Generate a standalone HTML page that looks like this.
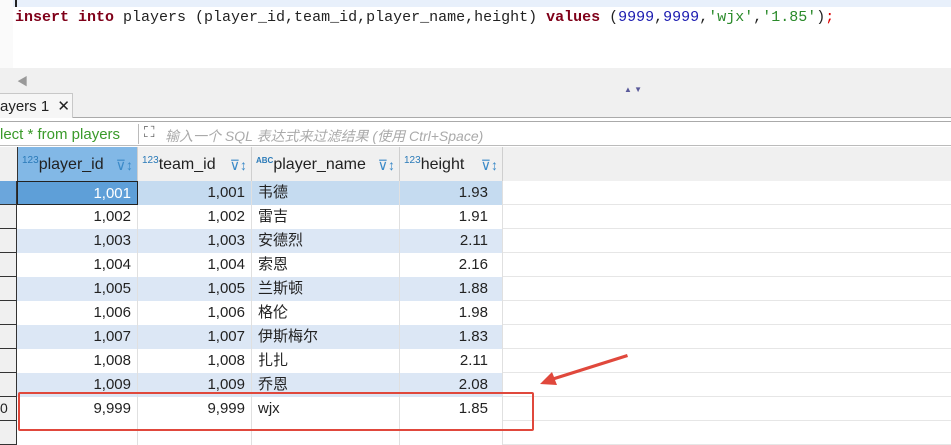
<!DOCTYPE html>
<html><head><meta charset="utf-8"><style>
*{margin:0;padding:0;box-sizing:border-box}
body{width:951px;height:435px;overflow:hidden;background:#fff;position:relative;font-family:"Liberation Sans","Noto Sans CJK SC",sans-serif;}
.abs{position:absolute}
.code{left:15px;top:9px;font:15px "Liberation Mono",monospace;white-space:pre;color:#222}
.kw{color:#7f0019;font-weight:bold}.num{color:#1a1ab0}.str{color:#2a8a2a}.red{color:#d00}
.row{position:absolute;left:0;width:951px;height:24px;border-bottom:1px solid #e6e6e6;font-size:15px;color:#222}
.c{position:absolute;top:0;height:24px;line-height:23px;border-right:1px solid #e0e0e0;padding:0 6px;white-space:nowrap}
.r{text-align:right}
.h{position:absolute;top:147px;height:34px;line-height:36px;font-size:16px;color:#222;border-right:1px solid #cfcfcf;padding-left:4px}
.ic{font-size:10px;color:#2a7ab8;vertical-align:top;line-height:28px}
.fi{position:absolute;right:4px;top:0;font-size:14px;color:#3b8ac8}
</style></head><body>
<div class="abs" style="left:0;top:0;width:951px;height:7px;background:#e8f0fb"></div>
<div class="abs" style="left:0;top:0;width:13px;height:68px;background:#fafafa"></div>
<div class="abs" style="left:15px;top:0;width:2px;height:7px;background:#222"></div>
<div class="abs code"><span class="kw">insert into</span> players (player_id,team_id,player_name,height) <span class="kw">values</span> (<span class="num">9999</span>,<span class="num">9999</span>,<span class="str">'wjx'</span>,<span class="str">'1.85'</span>)<span class="red">;</span></div>
<div class="abs" style="left:0;top:68px;width:951px;height:50px;background:#f0f0f0"></div>
<div class="abs" style="left:17px;top:73px;font-size:11px;color:#999">◀</div>
<div class="abs" style="left:624px;top:85px;font-size:8px;color:#5a5a9a">▲ ▼</div>
<div class="abs" style="left:0;top:93px;width:73px;height:25px;background:#f6f6f6;border:1px solid #c8c8c8;border-bottom:none;border-left:none;font-size:15px;line-height:26px;color:#222">ayers 1 <span style="margin-left:4px">✕</span></div>
<div class="abs" style="left:73px;top:117px;width:878px;height:1px;background:#aaa"></div>
<div class="abs" style="left:0;top:121px;width:951px;height:1px;background:#aaa"></div>
<div class="abs" style="left:0;top:122px;width:951px;height:24px;border-bottom:1px solid #bbb;background:#fff"></div>
<div class="abs" style="left:0;top:126px;font-size:15px;color:#3a9a2a">lect * from players</div>
<div class="abs" style="left:138px;top:124px;width:1px;height:20px;background:#bbb"></div>
<div class="abs" style="left:144px;top:124px;font-size:15px;color:#555">⛶</div>
<div class="abs" style="left:165px;top:126px;font-size:14px;font-style:italic;color:#aaa">输入一个 SQL 表达式来过滤结果 (使用 Ctrl+Space)</div>
<div class="abs" style="left:0;top:147px;width:951px;height:34px;background:#f0f0f0"></div>
<div class="h" style="left:17px;width:121px;background:#82b8e6;border-left:1px solid #333"><span class="ic">123</span>player_id<span class="fi">⊽↕</span></div>
<div class="h" style="left:138px;width:114px"><span class="ic">123</span>team_id<span class="fi">⊽↕</span></div>
<div class="h" style="left:252px;width:148px"><span class="ic" style="font-size:8px;font-weight:bold">ABC</span>player_name<span class="fi">⊽↕</span></div>
<div class="h" style="left:400px;width:103px"><span class="ic">123</span>height<span class="fi">⊽↕</span></div>
<div id="rows"></div>
<script>
var d=[["1,001","韦德","1.93"],["1,002","雷吉","1.91"],["1,003","安德烈","2.11"],["1,004","索恩","2.16"],["1,005","兰斯顿","1.88"],["1,006","格伦","1.98"],["1,007","伊斯梅尔","1.83"],["1,008","扎扎","2.11"],["1,009","乔恩","2.08"],["9,999","wjx","1.85"],["","",""]];
var h="";
for(var i=0;i<d.length;i++){var y=181+i*24;var bg=i==0?"#c5dbf0":(i%2==0&&i<10?"#dce7f5":"#fff");
var rn=i==0?"#6ba6dc":"#f0f0f0";
h+='<div class="row" style="top:'+y+'px"><div class="c" style="left:0;width:17px;background:'+rn+';border-right:1px solid #333;border-bottom:1px solid #333;padding:0;font-size:14px">'+(i==9?"0":"")+'</div>';
var s=i==0?'background:#5e9fd8;color:#fff;border:1px solid #222;':'background:'+bg+';';
h+='<div class="c r" style="left:17px;width:121px;'+s+'">'+d[i][0]+'</div>';
h+='<div class="c r" style="left:138px;width:114px;background:'+bg+'">'+d[i][0]+'</div>';
h+='<div class="c" style="left:252px;width:148px;background:'+bg+'">'+d[i][1]+'</div>';
h+='<div class="c r" style="left:400px;width:103px;background:'+bg+';padding-right:14px">'+d[i][2]+'</div></div>';}
document.getElementById("rows").innerHTML=h;
</script>
<div class="abs" style="left:18px;top:392px;width:516px;height:39px;border:2px solid #e0483c;border-radius:2px"></div>
<svg class="abs" style="left:530px;top:350px" width="105" height="40"><path d="M97 4 L98 7 L25 30 L27 35 L10 34 L22 22 L24 27 Z" fill="#e0483c"/></svg>
</body></html>
